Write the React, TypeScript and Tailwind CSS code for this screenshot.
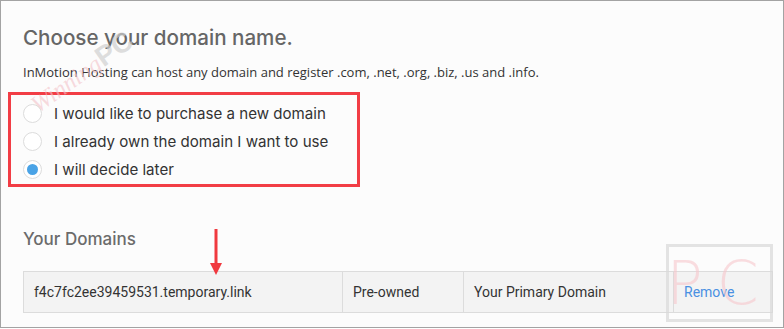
import React from "react";

const Radio = ({ checked }: { checked?: boolean }) => (
  <span className="relative flex h-[19px] w-[19px] shrink-0 items-center justify-center rounded-full border border-[#dcdcdc] bg-white">
    {checked && <span className="h-[11px] w-[11px] rounded-full bg-[#4aa3e6]" />}
  </span>
);

export default function App() {
  const options = [
    "I would like to purchase a new domain",
    "I already own the domain I want to use",
    "I will decide later",
  ];
  return (
    <div className="relative h-[329px] w-[784px] overflow-hidden bg-white">
      <div className="h-[328px] w-[784px] border border-[#a3a3a3] bg-[#fcfcfc] font-['Roboto',sans-serif]">
        <div className="flex flex-col pl-[7px] pr-[10px] pt-[23px]">
          <h1 className="pl-[15px] font-['Inter',sans-serif] text-[20.6px] font-medium leading-[28px] text-[#666]">
            Choose your domain name.
          </h1>
          <p className="mt-[10px] pl-[15px] font-['Open_Sans',sans-serif] text-[13px] leading-[20px] text-[#333]">
            InMotion Hosting can host any domain and register .com, .net, .org, .biz, .us and .info.
          </p>
          <div className="mt-[10px] flex w-[352px] flex-col gap-[9px] border-[3px] border-[#f23d45] pb-[5px] pt-[9px] pl-[12px]">
            {options.map((o, i) => (
              <label key={o} className="flex items-center gap-[12px]">
                <Radio checked={i === 2} />
                <span className="font-['Inter',sans-serif] text-[15.1px] leading-[19px] text-[#333]">{o}</span>
              </label>
            ))}
          </div>
          <h2 className="mt-[40px] pl-[15px] font-['Inter',sans-serif] text-[17px] font-medium leading-[24px] text-[#6b6b6b]">
            Your Domains
          </h2>
          <div className="relative ml-[15px] mt-[20px] flex h-[42px] w-[750px] border border-[#dcdcdc] bg-[#f3f3f3] text-[14px] text-[#333]">
            <div className="flex w-[319px] items-center border-r border-[#dcdcdc] pl-[10px]">
              f4c7fc2ee39459531.temporary.link
            </div>
            <div className="flex w-[121px] items-center border-r border-[#dcdcdc] pl-[10px]">Pre-owned</div>
            <div className="flex w-[210px] items-center border-r border-[#dcdcdc] pl-[10px]">Your Primary Domain</div>
            <div className="flex flex-1 items-center pl-[10px] text-[#4a90e2]">Remove</div>
          </div>
        </div>
      </div>
      {/* annotation arrow */}
      <svg className="absolute left-[208px] top-[229px]" width="16" height="48" viewBox="0 0 16 48">
        <line x1="8" y1="0" x2="8" y2="36" stroke="#f0393f" strokeWidth="3" />
        <polygon points="2,34 14,34 8,46" fill="#f0393f" />
      </svg>
      {/* watermarks */}
      <div className="pointer-events-none absolute left-[666px] top-[244px] flex h-[78px] w-[107px] items-center justify-center border-[3px] border-[#d8d8d8]/70">
        <span className="font-['DejaVu_Sans',sans-serif] text-[60px] font-light leading-none tracking-[14px] text-[#f6c6cc]/60">PC</span>
      </div>
      <div className="pointer-events-none absolute left-[22px] top-[58px] origin-center -rotate-[35deg] whitespace-nowrap font-['Liberation_Serif',serif] text-[24px] italic leading-none text-[#f3c2c8]/60">
        Winning<span className="font-['Liberation_Sans',sans-serif] text-[28px] not-italic font-bold text-[#cfcfcf]/70">PC</span>
      </div>
    </div>
  );
}
